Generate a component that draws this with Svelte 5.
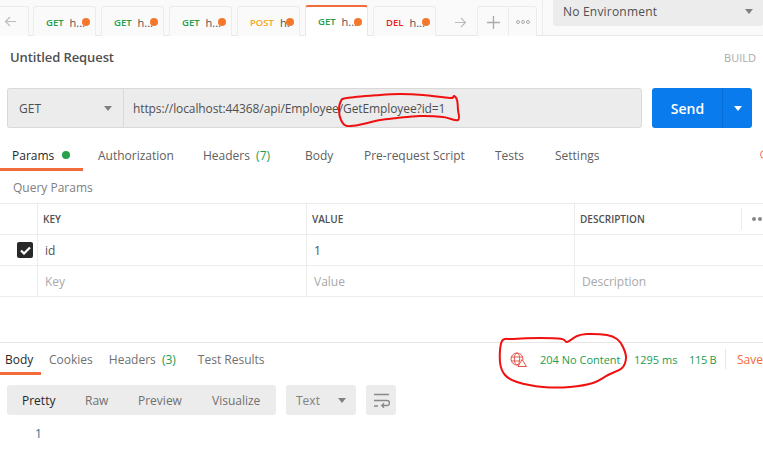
<script>
  const tabs = [
    { m: 'GET', c: 'get', t: 'h...' },
    { m: 'GET', c: 'get', t: 'h...' },
    { m: 'GET', c: 'get', t: 'h...' },
    { m: 'POST', c: 'post', t: 'h.' },
    { m: 'GET', c: 'get', t: 'h...', active: true },
    { m: 'DEL', c: 'del', t: 'h...' }
  ];
  const reqTabs = [
    { t: 'Authorization', w: 105 },
    { t: 'Headers', n: '(7)', w: 102 },
    { t: 'Body', w: 59 },
    { t: 'Pre-request Script', w: 131 },
    { t: 'Tests', w: 60 },
    { t: 'Settings', w: 60 }
  ];

  // closed smooth curve through hand-traced points of the red marker strokes
  function smooth(p) {
    const n = p.length;
    let d = `M${p[0][0]} ${p[0][1]}`;
    for (let i = 0; i < n; i++) {
      const a = p[(i - 1 + n) % n], b = p[i], c = p[(i + 1) % n], e = p[(i + 2) % n];
      const c1 = [b[0] + (c[0] - a[0]) / 6, b[1] + (c[1] - a[1]) / 6];
      const c2 = [c[0] - (e[0] - b[0]) / 6, c[1] - (e[1] - b[1]) / 6];
      d += `C${c1[0].toFixed(1)} ${c1[1].toFixed(1)} ${c2[0].toFixed(1)} ${c2[1].toFixed(1)} ${c[0]} ${c[1]}`;
    }
    return d + 'Z';
  }
  const ring1 = smooth([[347,98],[380,95],[400,94],[423,95],[450,98],[454,96],[457,100],[458,110],[458,120],[443,117],[420,116],[397,118],[380,120],[363,124],[347,126],[341,120],[339,110],[341,101]]);
  const ring2 = smooth([[502,341],[513,339],[540,338],[562,339],[567,342],[577,336],[587,334],[607,335],[617,339],[623,347],[626,358],[622,368],[608,375],[593,383],[570,387],[543,387],[517,382],[505,375],[500,362]]);
</script>

<div class="page">
  <header class="topbar">
    <div class="tab nav-back">
      <svg width="13" height="11" viewBox="0 0 13 11"><path d="M12 5.5H1.5M6 1 1.5 5.5 6 10" fill="none" stroke="#bbb" stroke-width="1.1"/></svg>
    </div>
    <div class="tabs">
      {#each tabs as tab}
        <div class="tab req" class:active={tab.active}>
          <span class="method {tab.c}">{tab.m}</span>
          <span class="tname">{tab.t}</span>
          <span class="dot"></span>
        </div>
      {/each}
    </div>
    <div class="nav-fwd">
      <svg width="13" height="11" viewBox="0 0 13 11"><path d="M1 5.5h10.5M7 1l4.5 4.5L7 10" fill="none" stroke="#bbb" stroke-width="1.1"/></svg>
    </div>
    <div class="tab plus">
      <svg width="13" height="13" viewBox="0 0 13 13"><path d="M6.5 0v13M0 6.5h13" stroke="#aaa" stroke-width="1.3"/></svg>
    </div>
    <div class="tab more">
      <svg width="14" height="4" viewBox="0 0 14 4"><g fill="none" stroke="#999" stroke-width=".8"><circle cx="2" cy="2" r="1.5"/><circle cx="7" cy="2" r="1.5"/><circle cx="12" cy="2" r="1.5"/></g></svg>
    </div>
    <div class="env-wrap">
      <div class="env">
        <span>No Environment</span>
        <i class="caret"></i>
      </div>
    </div>
  </header>

  <div class="titlebar">
    <span class="title">Untitled Request</span>
    <span class="build">BUILD</span>
  </div>

  <div class="urlbar">
    <div class="method-select">
      <span>GET</span>
      <i class="caret"></i>
    </div>
    <div class="url">https://localhost:44368/api/Employee/GetEmployee?id=1</div>
    <div class="send">
      <span class="send-label">Send</span>
      <span class="send-arrow"><i class="caret white"></i></span>
    </div>
  </div>

  <nav class="reqtabs">
    <div class="rt first">Params <span class="gdot"></span></div>
    {#each reqTabs as r}
      <div class="rt" style="width:{r.w}px">{r.t}{#if r.n}&nbsp;<span class="count gap">{r.n}</span>{/if}</div>
    {/each}
    <span class="cookie-c"></span>
  </nav>

  <div class="qp">Query Params</div>

  <div class="table">
    <div class="row head">
      <div class="c chk"></div>
      <div class="c key">KEY</div>
      <div class="c val">VALUE</div>
      <div class="c desc">DESCRIPTION<span class="hdiv"></span><span class="hdots"></span></div>
    </div>
    <div class="row">
      <div class="c chk">
        <span class="checkbox">
          <svg width="11" height="9" viewBox="0 0 11 9"><path d="M1 4.5 4 7.5 10 1.5" fill="none" stroke="#fff" stroke-width="2.2"/></svg>
        </span>
      </div>
      <div class="c key body">id</div>
      <div class="c val body">1</div>
      <div class="c desc body"></div>
    </div>
    <div class="row">
      <div class="c chk"></div>
      <div class="c key ph">Key</div>
      <div class="c val ph">Value</div>
      <div class="c desc ph">Description</div>
    </div>
  </div>

  <div class="resphead">
    <div class="rtabs">
      <div class="rs on">Body</div>
      <div class="rs">Cookies</div>
      <div class="rs hd">Headers&nbsp;<span class="count gap">(3)</span></div>
      <div class="rs">Test Results</div>
    </div>
    <div class="stats">
      <svg class="globe" width="17" height="15" viewBox="0 0 17 15">
        <g fill="none" stroke="#e2574c" stroke-width="1">
          <circle cx="7" cy="7" r="6"/>
          <ellipse cx="7" cy="7" rx="2.7" ry="6"/>
          <path d="M1 5h12M1 9h9"/>
        </g>
        <path d="M12 7.5 16.5 14.5H8Z" fill="#fff" stroke="#e2574c"/>
      </svg>
      <span class="s status">204 No Content</span>
      <span class="s time">1295 ms</span>
      <span class="s size">115 B</span>
      <span class="sdiv"></span>
      <span class="save">Save</span>
    </div>
  </div>

  <div class="toolbar">
    <div class="seg">
      <span class="sg on">Pretty</span>
      <span class="sg raw">Raw</span>
      <span class="sg prev">Preview</span>
      <span class="sg vis">Visualize</span>
    </div>
    <div class="fmt"><span>Text</span><i class="caret"></i></div>
    <div class="wrapbtn">
      <svg width="17" height="15" viewBox="0 0 17 15"><path d="M1 1.5h15M1 7.5h13a2.2 2.2 0 0 1 0 5H9M11 10.2 8.7 12.5l2.3 2.3M1 13h4" fill="none" stroke="#888" stroke-width="1.3"/></svg>
    </div>
  </div>

  <div class="code"><span>1</span></div>

  <svg class="ink" width="763" height="461" viewBox="0 0 763 461">
    <g fill="none" stroke="#f01010" stroke-width="2" stroke-linecap="round" stroke-linejoin="round">
      <path d={ring1}/>
      <path d={ring2}/>
    </g>
  </svg>
</div>

<style>
  :global(body) { margin: 0; background: #fff; }
  .page {
    position: relative;
    width: 763px;
    height: 461px;
    overflow: hidden;
    background: #fff;
    font-family: "Open Sans", sans-serif;
    font-size: 12px;
    color: #505050;
  }
  .topbar {
    display: flex;
    height: 36px;
    box-sizing: border-box;
    background: #fafafa;
    border-bottom: 1px solid #e8e8e8;
  }
  .tab {
    box-sizing: border-box;
    display: flex;
    align-items: center;
    height: 30px;
    margin-top: 6px;
    border: 1px solid #ececec;
    border-bottom: none;
    border-radius: 3px 3px 0 0;
    background: #fafafa;
  }
  .nav-back { width: 29px; padding-left: 4px; border-left: none; border-radius: 0 3px 0 0; }
  .tabs { display: flex; gap: 5px; margin-left: 4px; }
  .req { width: 63px; padding: 1px 0 0 12px; font-size: 11px; position: relative; }
  .req.active {
    height: 31px;
    margin-top: 5px;
    padding-top: 0;
    background: #fff;
    border-top: 2px solid #f26b3a;
    border-left-color: #e8e8e8;
    border-right-color: #e8e8e8;
  }
  .method { font-size: 9.5px; font-weight: 600; margin-right: 6px; }
  .get { color: #249c4e; }
  .post { color: #f5a623; }
  .del { color: #e4261a; }
  .tname { color: #505050; }
  .dot {
    position: absolute;
    right: 5px;
    top: 11px;
    width: 8px;
    height: 8px;
    border-radius: 50%;
    background: #f4772c;
  }
  .nav-fwd { width: 41px; display: flex; align-items: center; padding-left: 18px; box-sizing: border-box; padding-top: 9px; }
  .plus { width: 31px; justify-content: center; border-right: none; border-radius: 3px 0 0 0; padding-top: 1px; }
  .more { width: 29px; justify-content: center; border-radius: 0 3px 0 0; padding-top: 1px; }
  .env-wrap {
    margin-left: 5px;
    flex: 1;
    border-left: 1px solid #ececec;
    padding-left: 10px;
  }
  .env {
    box-sizing: border-box;
    width: 210px;
    height: 26px;
    background: #ececec;
    border-radius: 0 0 3px 3px;
    display: flex;
    align-items: center;
    justify-content: space-between;
    padding: 0 10px 4px 10px;
    font-size: 12px;
    letter-spacing: .2px;
    color: #505050;
  }
  .caret {
    display: inline-block;
    width: 0;
    height: 0;
    border-left: 4px solid transparent;
    border-right: 4px solid transparent;
    border-top: 5px solid #808080;
  }
  .caret.white { border-top-color: #fff; }

  .titlebar {
    display: flex;
    justify-content: space-between;
    align-items: center;
    height: 42px;
    padding: 0 7px 0 10px;
  }
  .title { font-size: 13px; font-weight: 600; color: #505050; letter-spacing: -.1px; }
  .build { font-size: 11px; color: #a9a9a9; }

  .urlbar { display: flex; height: 40px; padding: 10px 0 0 7px; }
  .method-select {
    box-sizing: border-box;
    width: 116px;
    display: flex;
    align-items: center;
    justify-content: space-between;
    padding: 0 11px 0 11px;
    background: #ececec;
    border: 1px solid #d9d9d9;
    border-right: none;
    border-radius: 3px 0 0 3px;
    font-size: 12px;
  }
  .url {
    box-sizing: border-box;
    width: 519px;
    display: flex;
    align-items: center;
    padding-left: 9px;
    background: #ececec;
    border: 1px solid #d9d9d9;
    border-radius: 0 3px 3px 0;
    font-size: 12px;
    letter-spacing: -.1px;
    color: #505050;
  }
  .send {
    margin-left: 10px;
    width: 100px;
    display: flex;
    background: #097bed;
    border-radius: 3px;
    color: #fff;
    font-size: 14px;
    font-weight: 600;
  }
  .send-label { width: 69px; display: flex; align-items: center; justify-content: center; padding-left: 1px; border-right: 1px solid #0a6fd4; }
  .send-arrow { flex: 1; display: flex; align-items: center; justify-content: center; }

  .reqtabs { display: flex; height: 32px; margin-top: 11px; position: relative; }
  .rt { display: flex; align-items: center; white-space: pre; height: 32px; box-sizing: border-box; color: #606060; }
  .rt.first {
    width: 83px;
    padding: 3px 0 0 12px;
    color: #282828;
    border-bottom: 3px solid #f26b3a;
    margin-right: 15px;
  }
  .gdot { display: inline-block; width: 8px; height: 8px; border-radius: 50%; background: #26a14e; margin-left: 5px; }
  .count { color: #249c4e; }
  .count.gap { margin-left: 3px; }
  .cookie-c {
    position: absolute;
    left: 760px;
    top: 11px;
    width: 9px;
    height: 9px;
    box-sizing: border-box;
    border: 1px solid #f26b3a;
    border-radius: 50%;
  }
  .qp { height: 32px; padding: 6px 0 0 13px; box-sizing: border-box; line-height: 22px; color: #808080; }

  .table { border-top: 1px solid #ececec; }
  .row { display: flex; height: 31px; box-sizing: border-box; border-bottom: 1px solid #ececec; }
  .c { box-sizing: border-box; display: flex; align-items: center; border-right: 1px solid #ececec; height: 100%; }
  .chk { width: 38px; justify-content: center; }
  .key { width: 269px; padding-left: 6px; }
  .val { width: 268px; padding-left: 6px; }
  .desc { flex: 1; padding-left: 6px; border-right: none; position: relative; }
  .head .c { font-size: 10px; font-weight: 600; color: #505050; }
  .head .key { padding-left: 5px; }
  .head .val { padding-left: 5px; }
  .head .desc { padding-left: 5px; }
  .body { font-size: 12px; color: #505050; padding-left: 7px; }
  .ph { color: #a9a9a9; font-size: 12px; padding-left: 7px; }
  .hdiv { position: absolute; left: 166px; top: 4px; height: 22px; width: 1px; background: #ececec; }
  .hdots {
    position: absolute;
    left: 177px;
    top: 13px;
    width: 4px;
    height: 4px;
    border-radius: 50%;
    background: #888;
    box-shadow: 6px 0 0 #888;
  }
  .checkbox {
    width: 16px;
    height: 16px;
    border-radius: 2px;
    background: #282828;
    display: flex;
    align-items: center;
    justify-content: center;
    margin-left: 13px;
  }

  .resphead {
    display: flex;
    justify-content: space-between;
    height: 32px;
    margin-top: 45px;
    border-top: 1px solid #e6e6e6;
  }
  .rtabs { display: flex; }
  .rs { display: flex; align-items: center; height: 32px; box-sizing: border-box; margin-right: 16px; color: #707070; white-space: pre; }
  .rs.hd { margin-right: 22px; }
  .rs.on {
    width: 41px;
    padding: 3px 0 0 5px;
    margin-right: 8px;
    color: #282828;
    border-bottom: 3px solid #f26b3a;
  }
  .stats { display: flex; align-items: center; height: 32px; font-size: 11px; color: #249c4e; width: 252px; box-sizing: border-box; }
  .globe { margin: 0 12px 0 0; flex: none; position: relative; left: -1px; }
  .s { white-space: nowrap; }
  .status { width: 94px; flex: none; }
  .time { width: 55px; flex: none; }
  .size { width: 36px; flex: none; letter-spacing: -.3px; }
  .sdiv { width: 1px; height: 20px; flex: none; background: #e6e6e6; margin-right: 11px; }
  .save { color: #f26b3a; font-size: 12px; white-space: nowrap; }

  .toolbar { display: flex; margin-top: 10px; padding-left: 7px; height: 30px; }
  .seg, .fmt, .wrapbtn { background: #ececec; border-radius: 3px; display: flex; align-items: center; height: 30px; box-sizing: border-box; }
  .seg { width: 269px; }
  .sg { color: #707070; font-size: 12px; white-space: nowrap; }
  .sg.on { color: #282828; margin-left: 15px; width: 63px; }
  .raw { width: 53px; }
  .prev { width: 74px; }
  .fmt { width: 70px; margin-left: 10px; padding: 0 10px; justify-content: space-between; color: #808080; font-size: 12px; }
  .wrapbtn { width: 30px; margin-left: 10px; justify-content: center; }
  .code { margin-top: 9px; padding-left: 35px; line-height: 20px; font-size: 12px; color: #15789f; }
  .ink { position: absolute; left: 0; top: 0; pointer-events: none; }
</style>
